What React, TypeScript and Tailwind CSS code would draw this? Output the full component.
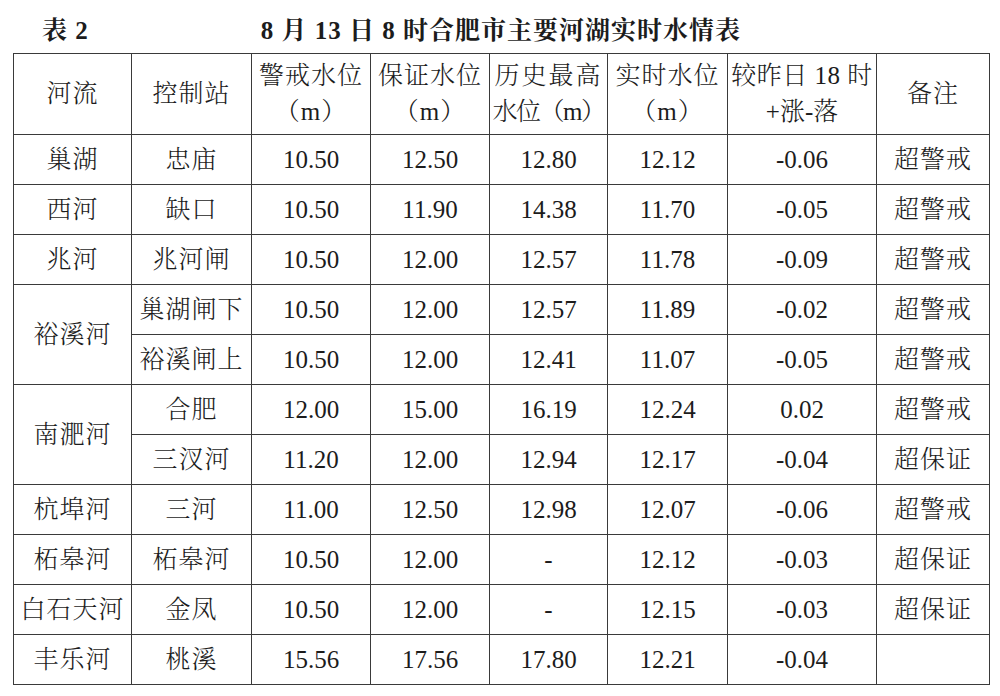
import React from 'react';

type Row = {
  river?: string;
  span?: number;
  station: string;
  warn: string;
  guard: string;
  high: string;
  now: string;
  diff: string;
  note: string;
};

const rows: Row[] = [
  { river: '巢湖', station: '忠庙', warn: '10.50', guard: '12.50', high: '12.80', now: '12.12', diff: '-0.06', note: '超警戒' },
  { river: '西河', station: '缺口', warn: '10.50', guard: '11.90', high: '14.38', now: '11.70', diff: '-0.05', note: '超警戒' },
  { river: '兆河', station: '兆河闸', warn: '10.50', guard: '12.00', high: '12.57', now: '11.78', diff: '-0.09', note: '超警戒' },
  { river: '裕溪河', span: 2, station: '巢湖闸下', warn: '10.50', guard: '12.00', high: '12.57', now: '11.89', diff: '-0.02', note: '超警戒' },
  { station: '裕溪闸上', warn: '10.50', guard: '12.00', high: '12.41', now: '11.07', diff: '-0.05', note: '超警戒' },
  { river: '南淝河', span: 2, station: '合肥', warn: '12.00', guard: '15.00', high: '16.19', now: '12.24', diff: '0.02', note: '超警戒' },
  { station: '三汊河', warn: '11.20', guard: '12.00', high: '12.94', now: '12.17', diff: '-0.04', note: '超保证' },
  { river: '杭埠河', station: '三河', warn: '11.00', guard: '12.50', high: '12.98', now: '12.07', diff: '-0.06', note: '超警戒' },
  { river: '柘皋河', station: '柘皋河', warn: '10.50', guard: '12.00', high: '-', now: '12.12', diff: '-0.03', note: '超保证' },
  { river: '白石天河', station: '金凤', warn: '10.50', guard: '12.00', high: '-', now: '12.15', diff: '-0.03', note: '超保证' },
  { river: '丰乐河', station: '桃溪', warn: '15.56', guard: '17.56', high: '17.80', now: '12.21', diff: '-0.04', note: '' },
];

const cell = 'border-[1.5px] border-[#3a3a3a] text-center align-middle p-0';
const zh = 'tracking-[1px]';

export default function App() {
  return (
    <div className="w-[1000px] h-[696px] bg-white text-[#1c1c1c] font-['Liberation_Serif','Noto_Serif_CJK_SC','Noto_Sans_CJK_SC',serif] font-light text-[25px]">
      <div className="pl-[13px] pr-[11px]">
        {/* Title */}
        <div className="grid grid-cols-[1fr_auto_1fr] items-end h-[53px] pb-[8px] font-bold leading-[28px]">
          <div className="pl-[29px] tracking-[1px]">表 2</div>
          <div className="tracking-[1px]">8 月 13 日 8 时合肥市主要河湖实时水情表</div>
          <div />
        </div>

        <table className="table-fixed border-collapse w-[976px]">
          <colgroup>
            <col className="w-[118px]" />
            <col className="w-[120px]" />
            <col className="w-[119px]" />
            <col className="w-[119px]" />
            <col className="w-[118px]" />
            <col className="w-[120px]" />
            <col className="w-[149px]" />
            <col className="w-[113px]" />
          </colgroup>
          <thead>
            <tr className="h-[81px] leading-[36px]">
              <th className={`${cell} font-light ${zh}`}>河流</th>
              <th className={`${cell} font-light ${zh}`}>控制站</th>
              <th className={`${cell} font-light ${zh}`}>
                警戒水位<br />（m）
              </th>
              <th className={`${cell} font-light ${zh}`}>
                保证水位<br />（m）
              </th>
              <th className={`${cell} font-light whitespace-nowrap`}>
                <span className="tracking-[2px]">历史最高</span>
                <br />
                <span className="tracking-[-1.5px]">水位（m）</span>
              </th>
              <th className={`${cell} font-light ${zh}`}>
                实时水位<br />（m）
              </th>
              <th className={`${cell} font-light whitespace-nowrap`}>
                <span className="tracking-[0.5px]">较昨日 18 时</span>
                <br />
                +涨-落
              </th>
              <th className={`${cell} font-light ${zh}`}>备注</th>
            </tr>
          </thead>
          <tbody>
            {rows.map((r, i) => (
              <tr key={i} className="h-[50px] leading-[30px]">
                {r.river && (
                  <td rowSpan={r.span ?? 1} className={`${cell} ${zh} whitespace-nowrap`}>
                    {r.river}
                  </td>
                )}
                <td className={`${cell} ${zh} whitespace-nowrap`}>{r.station}</td>
                <td className={cell}>{r.warn}</td>
                <td className={cell}>{r.guard}</td>
                <td className={cell}>{r.high}</td>
                <td className={cell}>{r.now}</td>
                <td className={cell}>{r.diff}</td>
                <td className={`${cell} ${zh}`}>{r.note}</td>
              </tr>
            ))}
          </tbody>
        </table>
      </div>
    </div>
  );
}
